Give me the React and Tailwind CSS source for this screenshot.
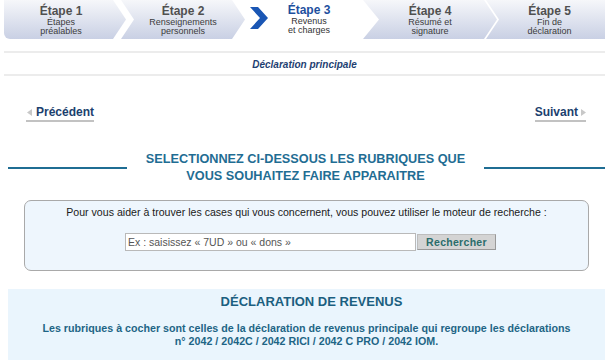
import React from 'react';

const font = { fontFamily: '"Liberation Sans", Arial, sans-serif' };

const steps = [
  { title: 'Étape 1', lines: ['Étapes', 'préalables'] },
  { title: 'Étape 2', lines: ['Renseignements', 'personnels'] },
  { title: 'Étape 3', lines: ['Revenus', 'et charges'], active: true },
  { title: 'Étape 4', lines: ['Résumé et', 'signature'] },
  { title: 'Étape 5', lines: ['Fin de', 'déclaration'] },
];

const StepText = ({ step }) => (
  <div className="flex flex-col items-center leading-none pt-[1px]">
    <div className={`text-[12px] leading-[13px] font-bold ${step.active ? 'text-[#1d4f9e]' : 'text-[#505050]'}`}>{step.title}</div>
    <div className={`text-[9px] leading-[9px] text-center ${step.active ? 'text-[#333]' : 'text-[#3c3c3c]'}`}>
      {step.lines.map((l) => (
        <div key={l}>{l}</div>
      ))}
    </div>
  </div>
);

const shape = 'h-full flex items-center justify-center bg-gradient-to-b from-[#f6f7fa] to-[#c9d0e4]';

const Stepper = () => (
  <div className="flex h-[39px] pl-[4px]">
    <div className={`w-[122px] pr-[8px] rounded-bl-[6px] ${shape} [clip-path:polygon(0_0,calc(100%-13px)_0,100%_50%,calc(100%-13px)_100%,0_100%)]`}>
      <StepText step={steps[0]} />
    </div>
    <div className={`-ml-[5px] w-[124px] ${shape} [clip-path:polygon(0_0,calc(100%-13px)_0,100%_50%,calc(100%-13px)_100%,0_100%,13px_50%)]`}>
      <StepText step={steps[1]} />
    </div>
    <div className="w-[118px] h-full flex items-center">
      <svg width="19" height="22" viewBox="0 0 19 22" className="ml-[5px] -mt-[4px]">
        <polygon points="0,0 8,0 18,11 8,22 0,22 10,11" fill="#1a56b4" />
      </svg>
      <div className="flex-1 flex justify-center pr-[14px] -mt-[2px]">
        <StepText step={steps[2]} />
      </div>
    </div>
    <div className={`w-[134px] ${shape} [clip-path:polygon(0_0,calc(100%-13px)_0,100%_50%,calc(100%-13px)_100%,0_100%,16px_50%)]`}>
      <StepText step={steps[3]} />
    </div>
    <div className={`-ml-[11px] flex-1 pl-[8px] ${shape} [clip-path:polygon(0_0,100%_0,100%_100%,0_100%,13px_50%)]`}>
      <StepText step={steps[4]} />
    </div>
  </div>
);

export default function App() {
  return (
    <div className="w-[605px] h-[360px] overflow-hidden bg-white" style={font}>
      <Stepper />

      <div className="mt-[12px] ml-[4px] border-t-2 border-b-2 border-[#ececec] h-[25px] flex items-center justify-center">
        <span className="text-[10px] font-bold italic text-[#1f3f72] mt-[1px]">Déclaration principale</span>
      </div>

      <div className="mt-[29px] px-[26px] flex justify-between">
        <div className="flex items-center border-b-2 border-[#c2c2c2] pb-[1px]">
          <svg width="5" height="7" viewBox="0 0 5 7" className="mr-[4px] ml-[1px]">
            <polygon points="5,0 0,3.5 5,7" fill="#c8c8c8" />
          </svg>
          <span className="text-[12px] font-bold text-[#1c3f6e] leading-[14px]">Précédent</span>
        </div>
        <div className="flex items-center border-b-2 border-[#c2c2c2] pb-[1px] -mr-[7px]">
          <span className="text-[12px] font-bold text-[#1c3f6e] leading-[14px]">Suivant</span>
          <svg width="5" height="7" viewBox="0 0 5 7" className="ml-[3px]">
            <polygon points="0,0 5,3.5 0,7" fill="#c8c8c8" />
          </svg>
        </div>
      </div>

      <div className="mt-[29px] flex items-center pl-[8px]">
        <div className="w-[119px] h-[2px] bg-[#1f6d93]" />
        <div className="flex-1 text-center text-[12.7px] font-bold text-[#1f6d93] leading-[17px]">
          <div>SELECTIONNEZ CI-DESSOUS LES RUBRIQUES QUE</div>
          <div>VOUS SOUHAITEZ FAIRE APPARAITRE</div>
        </div>
        <div className="w-[121px] h-[2px] bg-[#1f6d93]" />
      </div>

      <div className="mt-[15px] ml-[24px] w-[565px] h-[71px] rounded-[7px] border border-[#a9a9a9] bg-[#eef6fd] flex flex-col items-center">
        <div className="mt-[5px] text-[10.6px] text-[#1a1a1a] leading-[13px]">
          Pour vous aider à trouver les cases qui vous concernent, vous pouvez utiliser le moteur de recherche :
        </div>
        <div className="mt-[14px] self-start ml-[100px] flex items-center">
          <input
            type="text"
            placeholder="Ex : saisissez « 7UD » ou « dons »"
            className="w-[291px] h-[18px] border border-[#b9b9b9] bg-white px-[2px] text-[10.5px] text-[#444] placeholder:text-[#555] outline-none"
            style={font}
          />
          <button
            className="ml-[1px] w-[79px] h-[16px] bg-[#d4d4d4] border border-[#bdbdbd] border-b-[#999] border-r-[#999] text-[10.5px] font-bold text-[#2a6d6b] tracking-[0.3px] leading-none"
            style={font}
          >
            Rechercher
          </button>
        </div>
      </div>

      <div className="mt-[18px] ml-[8px] h-[80px] bg-[#eaf5fd] flex flex-col items-center">
        <div className="mt-[5px] text-[13px] font-bold text-[#1b5f80] leading-[16px] pl-[10px]">DÉCLARATION DE REVENUS</div>
        <div className="mt-[12px] text-[10.7px] font-bold text-[#1e6586] leading-[13px] text-center">
          <div>Les rubriques à cocher sont celles de la déclaration de revenus principale qui regroupe les déclarations</div>
          <div>n° 2042 / 2042C / 2042 RICI / 2042 C PRO / 2042 IOM.</div>
        </div>
      </div>
    </div>
  );
}
